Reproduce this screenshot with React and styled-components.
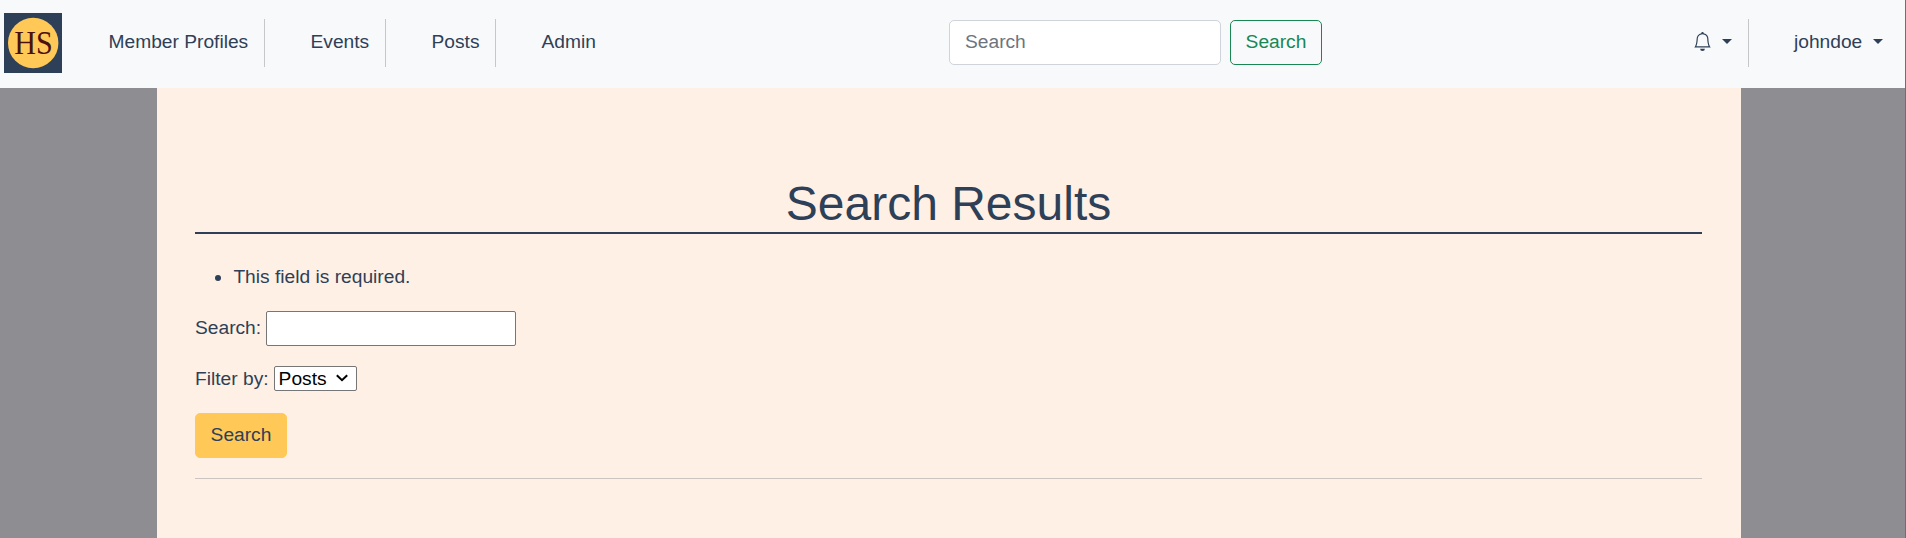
import React from "react";
import styled, { createGlobalStyle } from "styled-components";

const GlobalStyle = createGlobalStyle`
  *, *::before, *::after { box-sizing: border-box; }
  body {
    margin: 0;
    background: #8e8d92;
    color: #2e4057;
    font: 19.2px/28.8px "Liberation Sans", Arial, sans-serif;
  }
  input, select, button { font: inherit; margin: 0; }
`;

const Page = styled.div`
  height: 538px;
  display: flex;
  flex-direction: column;
  overflow: hidden;
  border-right: 1px solid #707072;
`;

const Navbar = styled.nav`
  display: flex;
  align-items: flex-start;
  height: 88px;
  flex: none;
  background: #f8f9fb;
`;

const Logo = styled.svg`
  display: block;
  width: 58px;
  height: 60px;
  margin: 13px 1px 0 4px;
`;

const NavItem = styled.a`
  display: flex;
  align-items: center;
  height: 48px;
  margin-top: 19px;
  width: ${(p) => p.$width}px;
  padding: 0 0 3px ${(p) => p.$indent ?? 45.5}px;
  border-right: 1px solid ${(p) => (p.$divider ? "#c6c7c9" : "transparent")};
  color: inherit;
  text-decoration: none;
  white-space: nowrap;
`;

const NavText = styled.span`
  padding-top: 2px;
`;

const Caret = styled.span`
  border-top: 5.5px solid;
  border-left: 5px solid transparent;
  border-right: 5px solid transparent;
  margin: 0 0 1px ${(p) => p.$gap}px;
`;

const SearchForm = styled.form`
  display: flex;
  gap: 9px;
  margin: 20px auto 0 303px;
`;

const SearchField = styled.input`
  width: 272px;
  height: 45px;
  padding: 0 15px 2px;
  border: 1px solid #ced4da;
  border-radius: 5px;
  background: #fff;
  &::placeholder { color: #6c757d; opacity: 1; }
`;

const Button = styled.button`
  display: block;
  width: 92px;
  height: 45px;
  padding: ${(p) => (p.$solid ? "1px 0 0" : "0 0 1px")};
  border: 1px solid ${(p) => (p.$solid ? "#ffc857" : "#198754")};
  border-radius: 5px;
  background: ${(p) => (p.$solid ? "#ffc857" : "transparent")};
  color: ${(p) => (p.$solid ? "#2e4057" : "#198754")};
`;

const Panel = styled.main`
  flex: 1;
  width: 1584px;
  margin-left: 157px;
  padding: 87px 39px 0 38px;
  background: #fff0e5;
`;

const Title = styled.h1`
  height: 59px;
  margin: 0 0 29px;
  border-bottom: 2px solid #2e4057;
  font-size: 48px;
  font-weight: 400;
  line-height: 58px;
  text-align: center;
`;

const ErrorList = styled.ul`
  margin: 0 0 19px;
  padding-left: 38.4px;
`;

const Field = styled.label`
  display: flex;
  align-items: center;
  gap: 5px;
  height: ${(p) => p.$height}px;
  margin-bottom: ${(p) => p.$space}px;
`;

const Label = styled.span`
  padding-top: ${(p) => p.$drop}px;
`;

const TextInput = styled.input`
  width: 250px;
  height: 35px;
  padding: 1px 2px;
  border: 1px solid #767676;
  border-radius: 2px;
  background: #fff;
`;

const SelectBox = styled.span`
  display: grid;
  align-items: center;
  width: 83px;
  height: 25px;
  & > * { grid-area: 1 / 1; }
`;

const Select = styled.select`
  appearance: none;
  width: 83px;
  height: 25px;
  padding: 1px 0 0 4px;
  border: 1px solid #767676;
  border-radius: 2px;
  background: #fff;
  color: #000;
  line-height: 22px;
`;

const Chevron = styled.svg`
  justify-self: end;
  margin-right: 9px;
  pointer-events: none;
`;

const Rule = styled.hr`
  height: 1px;
  margin: 20px 0 0;
  border: 0;
  background: #cbc4c1;
`;

const Bell = () => (
  <svg width="19" height="19" viewBox="0 0 16 16" fill="currentColor">
    <path d="M8 16a2 2 0 0 0 2-2H6a2 2 0 0 0 2 2M8 1.918l-.797.161A4 4 0 0 0 4 6c0 .628-.134 2.197-.459 3.742-.16.767-.376 1.566-.663 2.258h10.244c-.287-.692-.502-1.49-.663-2.258C12.134 8.197 12 6.628 12 6a4 4 0 0 0-3.203-3.92zM14.22 12c.223.447.481.801.78 1H1c.299-.199.557-.553.78-1C2.68 10.2 3 6.88 3 6c0-2.42 1.72-4.44 4.005-4.901a1 1 0 1 1 1.99 0A5 5 0 0 1 13 6c0 .88.32 4.2 1.22 6" />
  </svg>
);

export default function App() {
  return (
    <>
      <GlobalStyle />
      <Page>
        <Navbar>
          <Logo viewBox="0 0 58 60">
            <rect width="58" height="60" fill="#2e4057" />
            <circle cx="29.2" cy="30" r="25.2" fill="#ffc857" />
            <text x="29.4" y="41" textAnchor="middle" textLength="38.5" lengthAdjust="spacingAndGlyphs" fontFamily="Liberation Serif, serif" fontSize="33" fill="#4b1010">HS</text>
          </Logo>
          <NavItem $width={202} $divider><NavText>Member Profiles</NavText></NavItem>
          <NavItem $width={121} $divider><NavText>Events</NavText></NavItem>
          <NavItem $width={110} $divider><NavText>Posts</NavText></NavItem>
          <NavItem $width={150}><NavText>Admin</NavText></NavItem>
          <SearchForm>
            <SearchField placeholder="Search" />
            <Button type="button">Search</Button>
          </SearchForm>
          <NavItem $width={56} $indent={0} $divider>
            <Bell />
            <Caret $gap={10} />
          </NavItem>
          <NavItem $width={156} $indent={45}>
            <NavText>johndoe</NavText>
            <Caret $gap={11} />
          </NavItem>
        </Navbar>
        <Panel>
          <Title>Search Results</Title>
          <ErrorList>
            <li>This field is required.</li>
          </ErrorList>
          <Field $height={35} $space={20}>
            <Label $drop={1}>Search:</Label>
            <TextInput />
          </Field>
          <Field $height={25} $space={22}>
            <Label $drop={2}>Filter by:</Label>
            <SelectBox>
              <Select>
                <option>Posts</option>
              </Select>
              <Chevron width="12" height="8" viewBox="0 0 12 8" fill="none" stroke="#000" strokeWidth="2">
                <path d="M.8 1.2 6 6.2l5.2-5" />
              </Chevron>
            </SelectBox>
          </Field>
          <Button $solid>Search</Button>
          <Rule />
        </Panel>
      </Page>
    </>
  );
}
